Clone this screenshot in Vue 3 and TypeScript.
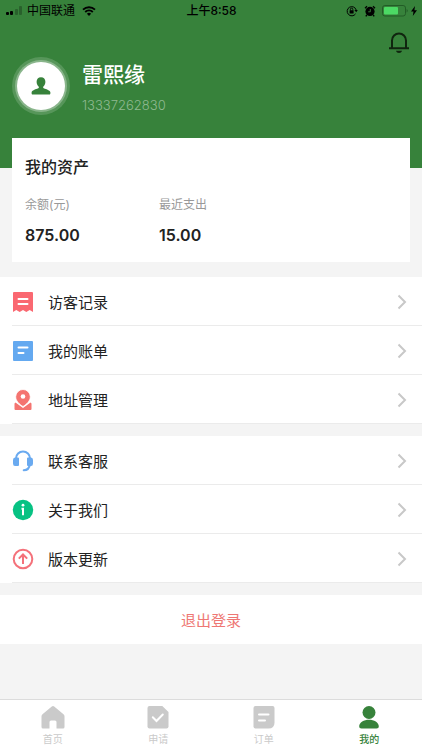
<script setup lang="ts">
type IconName = 'visitor' | 'bill' | 'address' | 'service' | 'about' | 'update'
type TabName = 'home' | 'apply' | 'order' | 'mine'

interface MenuItem {
  icon: IconName
  label: string
}

interface Tab {
  icon: TabName
  label: string
}

interface Asset {
  label: string
  value: number
}

const assets: Asset[] = [
  { label: '余额(元)', value: 875 },
  { label: '最近支出', value: 15 },
]

const groups: MenuItem[][] = [
  [
    { icon: 'visitor', label: '访客记录' },
    { icon: 'bill', label: '我的账单' },
    { icon: 'address', label: '地址管理' },
  ],
  [
    { icon: 'service', label: '联系客服' },
    { icon: 'about', label: '关于我们' },
    { icon: 'update', label: '版本更新' },
  ],
]

const tabs: Tab[] = [
  { icon: 'home', label: '首页' },
  { icon: 'apply', label: '申请' },
  { icon: 'order', label: '订单' },
  { icon: 'mine', label: '我的' },
]

const activeTab: TabName = 'mine'
</script>

<template>
  <div class="page">
    <header class="header">
      <div class="status">
        <div class="status-left">
          <svg width="17" height="10" viewBox="0 0 17 10" aria-hidden="true">
            <rect x="0" y="6" width="3" height="3" rx="1" />
            <rect x="4" y="5" width="3" height="4" rx="1" />
            <rect x="9" y="3" width="3" height="6" rx="1" opacity=".25" />
            <rect x="13" y="0" width="3" height="9" rx="1" opacity=".25" />
          </svg>
          <span class="carrier">中国联通</span>
          <svg class="wifi" width="14" height="10" viewBox="0 0 14 10" aria-hidden="true">
            <path d="M1 3.6a8.8 8.8 0 0 1 12 0M3.2 6a5.6 5.6 0 0 1 7.6 0" fill="none" stroke="#000" stroke-width="1.9" />
            <path d="M4.9 7.7a3.1 3.1 0 0 1 4.2 0L7 10z" />
          </svg>
        </div>
        <span class="time">上午8:58</span>
        <div class="status-right">
          <svg width="12" height="12" viewBox="0 0 12 12" aria-hidden="true">
            <path d="M9.6 8.8A4.6 4.6 0 1 1 10.2 5" fill="none" stroke="#000" />
            <path d="M8.4 5h3.4L10.2 7.3z" />
            <rect x="3.6" y="5.2" width="4" height="3.2" rx=".4" />
            <path d="M4.4 5.4V4.3a1.2 1.2 0 0 1 2.4 0v1.1" fill="none" stroke="#000" stroke-width=".9" />
          </svg>
          <svg width="12" height="12" viewBox="0 0 12 12" aria-hidden="true">
            <circle cx="6" cy="6.4" r="4.6" />
            <path d="M1 3.2 3 1.2M11 3.2 9 1.2M2.8 10 1.8 11.4M9.2 10l1 1.4" stroke="#000" stroke-width="1.3" />
            <path d="M6.3 4v2.8H4.2" fill="none" stroke="#37823b" stroke-width=".9" />
          </svg>
          <svg width="26" height="12" viewBox="0 0 26 12" aria-hidden="true">
            <rect x=".5" y=".5" width="23" height="10.5" rx="2.4" fill="none" stroke="#225c26" />
            <rect x="2" y="2" width="14" height="7.5" rx="1" fill="#4cd964" />
            <path d="M24.6 4a2 2 0 0 1 0 3.6z" fill="#225c26" />
          </svg>
          <svg width="6" height="10" viewBox="0 0 6 10" aria-hidden="true">
            <path d="M4 0 0 5.6h2.5L1.8 10 6 4.2H3.4z" />
          </svg>
        </div>
      </div>

      <div class="user">
        <div class="avatar">
          <svg width="20" height="20" viewBox="0 0 20 20" aria-hidden="true">
            <path
              d="M10 1.2c2.800 0 4.400 1.800 4.400 4.500 0 2-.8 3.900-2.200 5v1.400c1.200.8 7 2 7.200 4.400.1.700-.1 2-.6 2H1.200c-.5 0-.7-1.300-.6-2 .2-2.400 6-3.600 7.200-4.400v-1.400c-1.400-1.100-2.200-3-2.200-5C5.600 3 7.200 1.200 10 1.200z"
              fill="#37823b"
            />
          </svg>
        </div>
        <div class="who">
          <h1 class="name">雷熙缘</h1>
          <p class="phone">13337262830</p>
        </div>
        <button class="bell" type="button" aria-label="消息">
          <svg width="22" height="22" viewBox="0 0 22 22" aria-hidden="true">
            <path d="M4 16V8.500a7 7 0 0 1 14 0V16M1 16.200h20" fill="none" stroke="#10250f" stroke-width="2" />
            <path d="M8 18.800h6c-.4 1.500-1.600 2.200-3 2.200s-2.600-.7-3-2.200z" fill="#10250f" />
          </svg>
        </button>
      </div>
    </header>

    <main class="main">
      <section class="card">
        <h2 class="card-title">我的资产</h2>
        <dl class="assets">
          <div v-for="a in assets" :key="a.label" class="asset">
            <dt>{{ a.label }}</dt>
            <dd>{{ a.value.toFixed(2) }}</dd>
          </div>
        </dl>
      </section>

      <nav v-for="(group, i) in groups" :key="i" class="group">
        <a v-for="item in group" :key="item.label" class="row" href="#">
          <svg class="row-icon" width="22" height="22" viewBox="0 0 22 22" aria-hidden="true">
            <template v-if="item.icon === 'visitor'">
              <path d="M2 1h18q1 0 1 1v19l-3.300-2-3.400 2-3.300-2-3.300 2-3.400-2L1 21V2q0-1 1-1z" fill="#fa6871" />
              <path d="M6.500 8h9M6.500 13h9" stroke="#fff" stroke-width="2" stroke-linecap="round" />
            </template>
            <template v-else-if="item.icon === 'bill'">
              <rect x="1" y="1" width="20" height="20" rx="1" fill="#64a9f0" />
              <path d="M6.500 7.500h9M6.500 13h5" stroke="#fff" stroke-width="2" stroke-linecap="round" />
            </template>
            <template v-else-if="item.icon === 'address'">
              <path d="M3.500 13.500 11 19l7.500-5.500 1 1V20q0 1-1 1h-15q-1 0-1-1v-5.500z" fill="#f47470" />
              <path
                d="M11 .5a7.300 7.300 0 0 1 7.300 7.300c0 4-3.500 7.500-7.300 9.700-3.800-2.200-7.300-5.700-7.300-9.700A7.300 7.300 0 0 1 11 .5z"
                fill="#f47470"
                stroke="#fff"
                stroke-width=".8"
              />
              <circle cx="11" cy="7.500" r="2.300" fill="#fff" />
            </template>
            <template v-else-if="item.icon === 'service'">
              <path d="M4 9V8.500a7 7 0 0 1 14 0V9M18 14c-.5 3.800-2.800 6.300-6.300 6.300" fill="none" stroke="#6aaaf0" stroke-width="2" stroke-linecap="round" />
              <path d="M3 7.500h3q1 0 1 1V15q0 1-1 1H3q-2 0-2-2.500V10q0-2.500 2-2.500zM16 7.500h3q2 0 2 2.500v3.500q0 2.500-2 2.500h-3q-1 0-1-1V8.500q0-1 1-1z" fill="#6aaaf0" />
            </template>
            <template v-else-if="item.icon === 'about'">
              <circle cx="11" cy="11" r="10.200" fill="#07c283" />
              <circle cx="11" cy="6.200" r="1.400" fill="#fff" />
              <path d="M9.500 9.800H11v6.500" fill="none" stroke="#fff" stroke-width="2" />
            </template>
            <template v-else>
              <circle cx="11" cy="11" r="9.300" fill="none" stroke="#f4717a" stroke-width="2" />
              <path d="M11 16V6.800M6.800 10.600 11 6.500l4.200 4.100" fill="none" stroke="#f4717a" stroke-width="2" />
            </template>
          </svg>
          <span class="row-body">
            <span class="row-label">{{ item.label }}</span>
            <svg width="10" height="16" viewBox="0 0 10 16" aria-hidden="true">
              <path d="M1.500 1.500 8 8l-6.500 6.500" fill="none" stroke="#c8c8c8" stroke-width="2" />
            </svg>
          </span>
        </a>
      </nav>

      <button class="logout" type="button">退出登录</button>
    </main>

    <nav class="tabs">
      <a v-for="tab in tabs" :key="tab.icon" class="tab" :class="{ active: tab.icon === activeTab }" href="#">
        <svg width="24" height="24" viewBox="0 0 24 24" fill="currentColor" aria-hidden="true">
          <path
            v-if="tab.icon === 'home'"
            d="M10.800 1.500q1.200-1 2.400 0l9.300 7.700q1 .9 1 2V22q0 1.500-1.500 1.500h-6.500V17q0-1.500-1.500-1.500h-4Q8.500 15.500 8.500 17v6.500H2Q.5 23.500.5 22V11.200q0-1.100 1-2z"
          />
          <template v-else-if="tab.icon === 'apply'">
            <path d="M3.500 1h12.800L22.500 7v14.500q0 2-2 2h-17q-2 0-2-2V3q0-2 2-2z" />
            <path d="m6.800 12.300 3.700 3.700 6.300-6.500" fill="none" stroke="#fff" stroke-width="2" stroke-linecap="round" />
          </template>
          <template v-else-if="tab.icon === 'order'">
            <path d="M3.500 1h17q2 0 2 2v14.500q0 6-6 6h-13q-2 0-2-2V3q0-2 2-2z" />
            <path d="M7 9.500h9.500M7 15.500h6" stroke="#fff" stroke-width="2" stroke-linecap="round" />
          </template>
          <template v-else>
            <circle cx="12" cy="7.500" r="6.500" />
            <path d="M12 14.800c5 0 9.800 2.700 9.800 6.500 0 1.600-.8 2.200-2.300 2.200h-15c-1.500 0-2.300-.6-2.300-2.200 0-3.800 4.800-6.500 9.800-6.500z" />
          </template>
        </svg>
        <span>{{ tab.label }}</span>
      </a>
    </nav>
  </div>
</template>

<style>
body {
  background: #f4f4f4;
}
</style>

<style scoped>
.page {
  display: flex;
  flex-direction: column;
  min-height: 100vh;
  font-family: Inter, 'Noto Sans CJK SC', sans-serif;
  color: #222;
  background: #f4f4f4;
}

h1,
h2,
p,
dl,
dd {
  margin: 0;
}

svg {
  display: block;
  flex: none;
}

a {
  color: inherit;
  text-decoration: none;
}

button {
  padding: 0;
  border: 0;
  background: none;
  font-family: inherit;
}

.header {
  height: 168px;
  color: #fff;
  background: #37823b;
}

.status {
  display: grid;
  grid-template-columns: 1fr auto 1fr;
  align-items: center;
  height: 22px;
  padding: 0 5px 0 6px;
  font-size: 12px;
  line-height: 22px;
  color: #000;
}

.status-left,
.status-right {
  display: flex;
  align-items: center;
}

.carrier {
  margin: 0 7px 0 4px;
}

.time {
  font-size: 12px;
  font-weight: 500;
}

.status-right {
  justify-content: flex-end;
  gap: 6px;
}

.status-right svg:last-child {
  margin-left: -3px;
}

.user {
  display: flex;
  align-items: flex-start;
  padding: 10px 12px 0 17px;
}

.avatar {
  display: grid;
  place-items: center;
  width: 48px;
  height: 48px;
  margin: 30px 17px 0 0;
  border-radius: 50%;
  background: #fff;
  box-shadow:
    0 0 0 2px rgba(255, 255, 255, 0.3),
    0 0 0 5px rgba(255, 255, 255, 0.16);
}

.who {
  flex: 1;
  padding-top: 28px;
}

.name {
  font-size: 21px;
  font-weight: 500;
  line-height: 30px;
}

.phone {
  margin-top: 6px;
  font-size: 13px;
  font-weight: 300;
  line-height: 18px;
  color: #8fb991;
}

.main {
  display: flex;
  flex: 1;
  flex-direction: column;
  gap: 12px;
}

.card {
  margin: -30px 12px 3px;
  padding: 16px 13px 15px;
  background: #fff;
}

.card-title {
  font-size: 16px;
  font-weight: 500;
  line-height: 26px;
}

.assets {
  display: grid;
  grid-template-columns: 134px 1fr;
  margin-top: 14px;
}

.asset dt {
  font-size: 12px;
  line-height: 22px;
  color: #999;
}

.asset dd {
  margin-top: 7px;
  font-size: 16px;
  font-weight: 600;
  line-height: 24px;
}

.group {
  background: #fff;
}

.row {
  display: flex;
  align-items: center;
  padding-left: 12px;
  background: linear-gradient(#ebebeb, #ebebeb) 12px 100% / 100% 1px no-repeat;
}

.row-body {
  display: flex;
  flex: 1;
  align-items: center;
  justify-content: space-between;
  height: 49px;
  padding: 0 15px 0 14px;
}

.row-label {
  font-size: 15px;
}

.logout {
  height: 49px;
  font-size: 15px;
  color: #ee7774;
  background: #fff;
}

.tabs {
  position: sticky;
  bottom: 0;
  display: grid;
  grid-template-columns: repeat(4, 1fr);
  height: 50px;
  border-top: 1px solid #dcdcdc;
  background: #fff;
}

.tab {
  display: flex;
  flex-direction: column;
  align-items: center;
  padding-top: 5px;
  font-size: 10px;
  line-height: 20px;
  color: #cacaca;
}

.tab.active {
  font-weight: 500;
  color: #37823b;
}
</style>
